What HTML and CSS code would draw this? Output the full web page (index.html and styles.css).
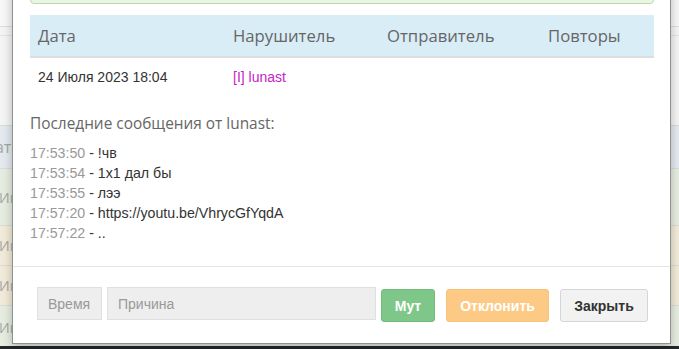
FILE: index.html
```html
<!DOCTYPE html>
<html lang="ru">
<head>
    <meta charset="UTF-8">
    <title>Жалобы</title>
    <link rel="stylesheet" href="styles.css">
</head>
<body>
    <div class="page">
        <div class="page-top"></div>
        <div class="page-row row-info"><span class="cut-head">Дата</span></div>
        <div class="page-row row-success tall"><span>Ик</span></div>
        <div class="page-row row-warning"><span>Ик</span></div>
        <div class="page-row row-warning"><span>Ик</span></div>
        <div class="page-row row-success"><span>Ик</span></div>
    </div>
    <div class="page-bottom"></div>

    <div class="modal">
        <div class="modal-body">
            <div class="alert"></div>
            <div class="report-table">
                <div class="report-head">
                    <div class="col-date">Дата</div>
                    <div class="col-user">Нарушитель</div>
                    <div class="col-sender">Отправитель</div>
                    <div class="col-repeat">Повторы</div>
                </div>
                <div class="report-row">
                    <div class="col-date">24 Июля 2023 18:04</div>
                    <div class="col-user"><span class="nick">[I] lunast</span></div>
                    <div class="col-sender"></div>
                    <div class="col-repeat"></div>
                </div>
            </div>
            <h4 class="messages-title">Последние сообщения от lunast:</h4>
            <ul class="messages">
                <li><span class="time">17:53:50</span> - !чв</li>
                <li><span class="time">17:53:54</span> - 1х1 дал бы</li>
                <li><span class="time">17:53:55</span> - лээ</li>
                <li><span class="time">17:57:20</span> - https://youtu.be/VhrycGfYqdA</li>
                <li><span class="time">17:57:22</span> - ..</li>
            </ul>
        </div>
        <div class="modal-footer">
            <input type="text" class="field field-time" placeholder="Время">
            <input type="text" class="field field-reason" placeholder="Причина">
            <button class="btn btn-mute">Мут</button>
            <button class="btn btn-decline">Отклонить</button>
            <button class="btn btn-close">Закрыть</button>
        </div>
    </div>
</body>
</html>
```

FILE: styles.css
```css
* {
    margin: 0;
    padding: 0;
    box-sizing: border-box;
}

body {
    position: relative;
    width: 679px;
    height: 349px;
    overflow: hidden;
    font-family: 'Liberation Sans', Arial, sans-serif;
    font-size: 14px;
    color: #333;
    background: #eef0ee;
}

/* page behind the modal */
.page-top {
    height: 125px;
    background: #f3f4f3;
    border-top: 26px solid #f6f7f6;
    box-shadow: inset 0 1px 0 #dcdedc, inset 0 9px 0 #f3f4f3, inset 0 10px 0 #e2e4e2;
}

.page-row {
    display: flex;
    align-items: center;
    border-top: 1px solid #d8dbd6;
    height: 43px;
    color: #a4a6a4;
    font-family: 'Open Sans', sans-serif;
    font-size: 14px;
    white-space: nowrap;
}

.page-row span {
    margin-left: -1px;
}

.page-row .cut-head {
    margin-left: -16px;
    font-size: 16px;
}

.page-row.tall {
    height: 57px;
}

.row-info { background: #e3e9ee; }
.row-success { background: #e6ede0; }
.row-warning { background: #f1ead8; height: 40px; }

.page-bottom {
    position: absolute;
    left: 0;
    right: 0;
    bottom: 0;
    height: 3px;
    background: #23262a;
}

/* modal */
.modal {
    position: absolute;
    left: 12px;
    top: -30px;
    width: 659px;
    background: #fff;
    border: 1px solid #8f918f;
    box-shadow: 0 3px 9px rgba(0, 0, 0, 0.25);
}

.modal-body {
    padding: 15px 16px 23px 17px;
}

.alert {
    height: 18px;
    background: #eaf5e4;
    border: 1px solid #b9dca9;
    border-radius: 0 0 4px 4px;
}

.report-table {
    margin-top: 11px;
}

.report-head,
.report-row {
    display: flex;
}

.report-head {
    height: 43px;
    align-items: center;
    background: #d9edf7;
    border-bottom: 2px solid #dddddd;
    font-family: 'Open Sans', sans-serif;
    font-size: 16.7px;
    color: #666;
}

.report-row {
    height: 38px;
    align-items: center;
}

.col-date { width: 203px; padding-left: 8px; }
.col-user { width: 154px; }
.col-sender { width: 161px; }
.col-repeat { flex: 1; }

.nick {
    color: #c722c7;
}

.messages-title {
    margin-top: 17px;
    font-family: 'Open Sans', sans-serif;
    font-size: 15.4px;
    font-weight: 400;
    line-height: 21px;
    color: #666;
}

.messages {
    list-style: none;
    margin-top: 9px;
    font-size: 14.2px;
    line-height: 20px;
}

.time {
    color: #999;
}

.modal-footer {
    display: flex;
    align-items: flex-start;
    height: 77px;
    padding: 20px 22px 0 24px;
    border-top: 1px solid #e5e5e5;
}

.field {
    height: 33px;
    padding: 0 10px;
    border: 1px solid #e0e0e0;
    background: #eeeeee;
    font-family: 'Liberation Sans', Arial, sans-serif;
    font-size: 14px;
    color: #333;
    outline: none;
}

.field::placeholder {
    color: #999;
}

.field-time { width: 65px; }
.field-reason { width: 269px; margin-left: 5px; }

.btn {
    height: 33px;
    margin-top: 2px;
    border: 1px solid transparent;
    border-radius: 3px;
    font-family: 'Liberation Sans', Arial, sans-serif;
    font-size: 14px;
    font-weight: bold;
    color: #fff;
    cursor: pointer;
}

.btn-mute {
    width: 54px;
    margin-left: 5px;
    background: #7ec789;
    border-color: #72bd7e;
}

.btn-decline {
    width: 103px;
    margin-left: 11px;
    background: #fdca86;
    border-color: #f8c27c;
}

.btn-close {
    width: 88px;
    margin-left: 11px;
    background: #f2f2f2;
    border-color: #d6d6d6;
    color: #333;
}
```
